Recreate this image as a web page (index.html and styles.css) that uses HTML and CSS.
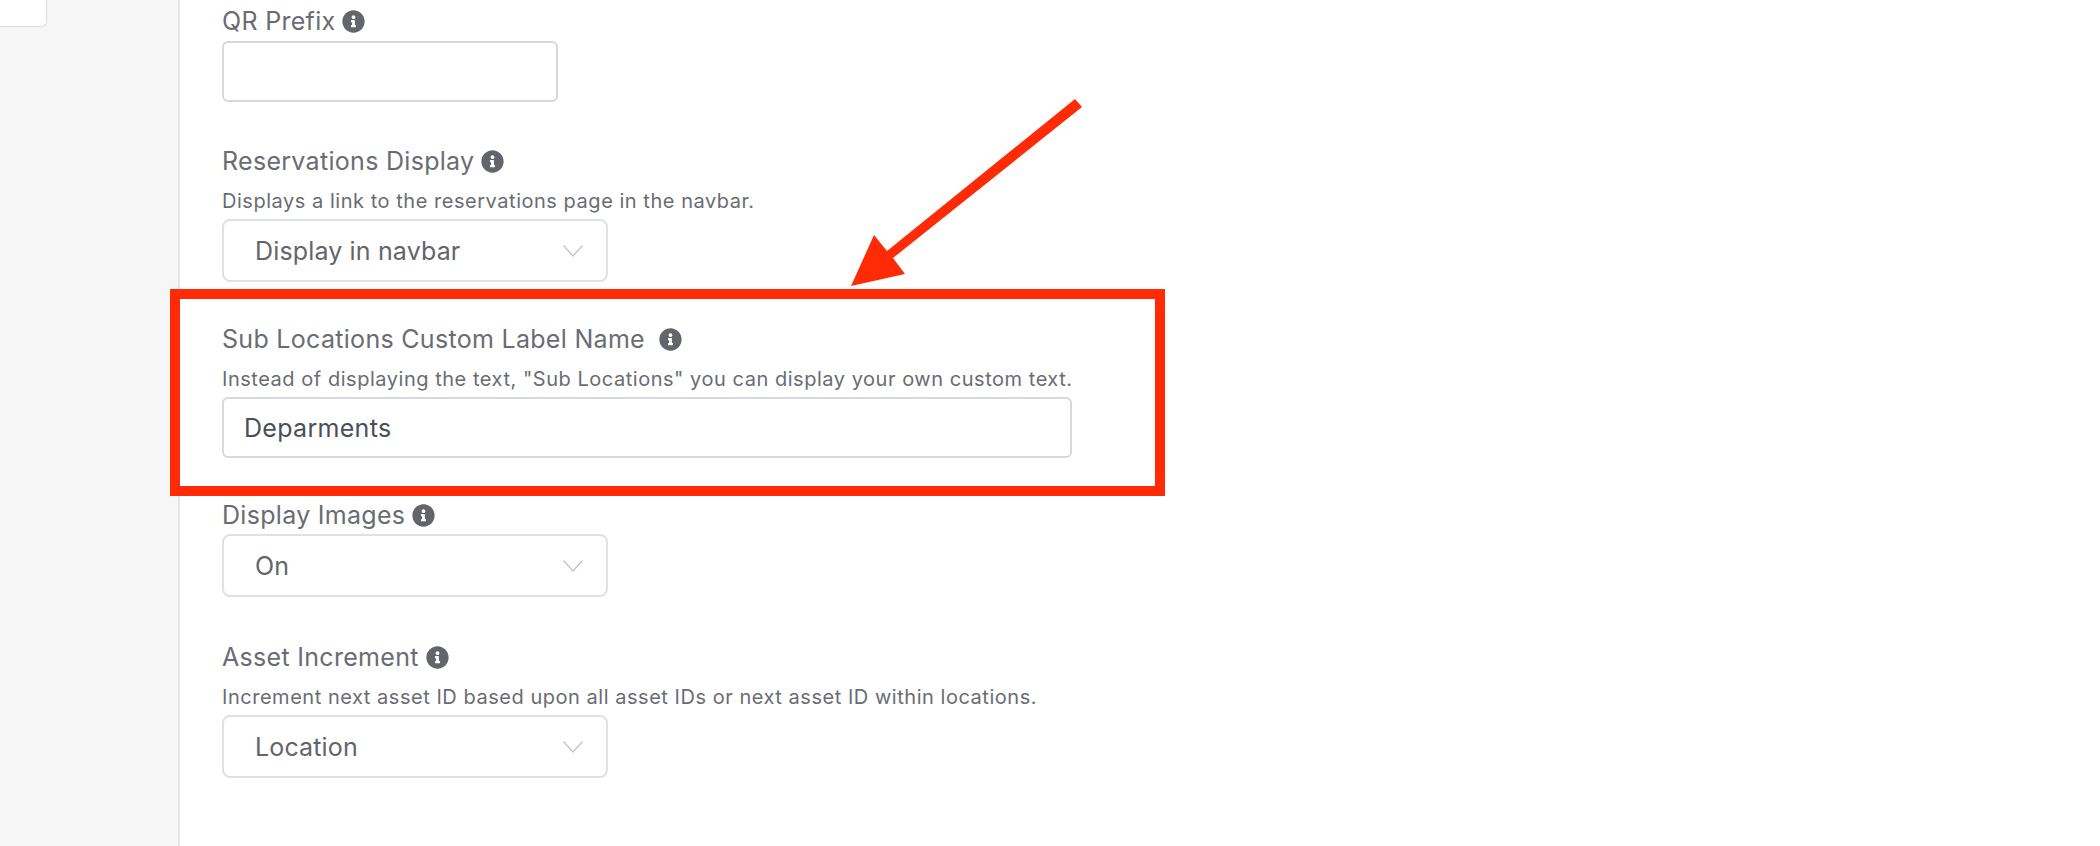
FILE: index.html
```html
<!DOCTYPE html>
<html lang="en">
<head>
    <meta charset="UTF-8">
    <title>Settings</title>
    <meta name="viewport" content="width=device-width">
    <link rel="stylesheet" href="styles.css">
</head>
<body>
    <svg class="defs" width="0" height="0">
        <symbol id="info" viewBox="0 0 512 512">
            <path d="M256 8C119.043 8 8 119.083 8 256c0 136.997 111.043 248 248 248s248-111.003 248-248C504 119.083 392.957 8 256 8zm0 110c23.196 0 42 18.804 42 42s-18.804 42-42 42-42-18.804-42-42 18.804-42 42-42zm56 254c0 6.627-5.373 12-12 12h-88c-6.627 0-12-5.373-12-12v-24c0-6.627 5.373-12 12-12h12v-64h-12c-6.627 0-12-5.373-12-12v-24c0-6.627 5.373-12 12-12h64c6.627 0 12 5.373 12 12v100h12c6.627 0 12 5.373 12 12v24z"/>
        </symbol>
        <symbol id="chevron" viewBox="0 0 20 12">
            <path d="M0.5 0.5 L10 11 L19.5 0.5" fill="none" stroke="currentColor" stroke-width="1.2"/>
        </symbol>
    </svg>

    <div class="page">
        <aside class="sidebar">
            <div class="side-card"></div>
        </aside>

        <main class="content">
            <div class="field field-qr">
                <label class="field-label">QR Prefix <svg class="info"><use href="#info"/></svg></label>
                <input class="text-input short" type="text">
            </div>

            <div class="field field-res">
                <label class="field-label">Reservations Display <svg class="info"><use href="#info"/></svg></label>
                <p class="help">Displays a link to the reservations page in the navbar.</p>
                <div class="select"><span>Display in navbar</span><svg class="chevron"><use href="#chevron"/></svg></div>
            </div>

            <div class="field field-sub">
                <label class="field-label">Sub Locations Custom Label Name <svg class="info wide"><use href="#info"/></svg></label>
                <p class="help">Instead of displaying the text, "Sub Locations" you can display your own custom text.</p>
                <input class="text-input long" type="text" value="Deparments">
            </div>

            <div class="field field-img">
                <label class="field-label">Display Images <svg class="info"><use href="#info"/></svg></label>
                <div class="select"><span>On</span><svg class="chevron"><use href="#chevron"/></svg></div>
            </div>

            <div class="field">
                <label class="field-label">Asset Increment <svg class="info"><use href="#info"/></svg></label>
                <p class="help">Increment next asset ID based upon all asset IDs or next asset ID within locations.</p>
                <div class="select"><span>Location</span><svg class="chevron"><use href="#chevron"/></svg></div>
            </div>
        </main>
    </div>

    <!-- annotation drawn on top of the screenshot -->
    <div class="callout"></div>
    <svg class="arrow" width="2100" height="846">
        <polygon points="1075,99 1082,107 893,258 905,274 851,286 874,235 887,251"/>
    </svg>
</body>
</html>
```

FILE: styles.css
```css
body {
  margin: 0;
  background: #fff;
  font-family: Inter, "Liberation Sans", sans-serif;
  color: #6a6c73;
  overflow: hidden;
}

.defs {
  position: absolute;
}

.page {
  display: flex;
  height: 846px;
}

.sidebar {
  width: 178px;
  flex: none;
  background: #f6f6f6;
  border-right: 2px solid #e3e4e6;
}

.side-card {
  width: 46px;
  height: 26px;
  background: #fff;
  border-right: 1px solid #dcdcdc;
  border-bottom: 1px solid #dcdcdc;
  border-bottom-right-radius: 6px;
}

.content {
  padding: 6px 0 0 42px;
}

.field {
  margin-bottom: 44px;
}

.field-res,
.field-sub {
  margin-bottom: 42px;
}

.field-img {
  margin-bottom: 45px;
}

.field-label {
  display: flex;
  align-items: center;
  gap: 7px;
  height: 30px;
  margin-bottom: 5px;
  font-size: 25px;
  letter-spacing: 0.3px;
}

.field-img .field-label {
  margin-bottom: 4px;
}

.info {
  width: 23px;
  height: 23px;
  margin-top: 1px;
  fill: #63656b;
}

.info.wide {
  margin-left: 7px;
}

.help {
  margin: 12px 0 5px;
  font-size: 20px;
  letter-spacing: 0.53px;
  line-height: 26px;
}

.text-input {
  display: block;
  box-sizing: border-box;
  height: 61px;
  padding: 0 20px;
  border: 2px solid #d5d8df;
  border-radius: 6px;
  background: #fff;
  font: 25px Inter, "Liberation Sans", sans-serif;
  letter-spacing: 0.3px;
  color: #495057;
  outline: none;
}

.text-input.short {
  width: 336px;
}

.text-input.long {
  width: 850px;
}

.select {
  display: flex;
  align-items: center;
  justify-content: space-between;
  box-sizing: border-box;
  width: 386px;
  height: 63px;
  padding: 0 23px 0 31px;
  border: 2px solid #dfe1e7;
  border-radius: 8px;
  font-size: 25px;
  letter-spacing: 0.15px;
  color: #63656b;
}

.chevron {
  width: 20px;
  height: 12px;
  color: #bfc2cb;
}

.callout {
  position: absolute;
  left: 170px;
  top: 289px;
  width: 975px;
  height: 187px;
  border: 10px solid #ff2a06;
}

.arrow {
  position: absolute;
  left: 0;
  top: 0;
  fill: #ff2a06;
}
```
